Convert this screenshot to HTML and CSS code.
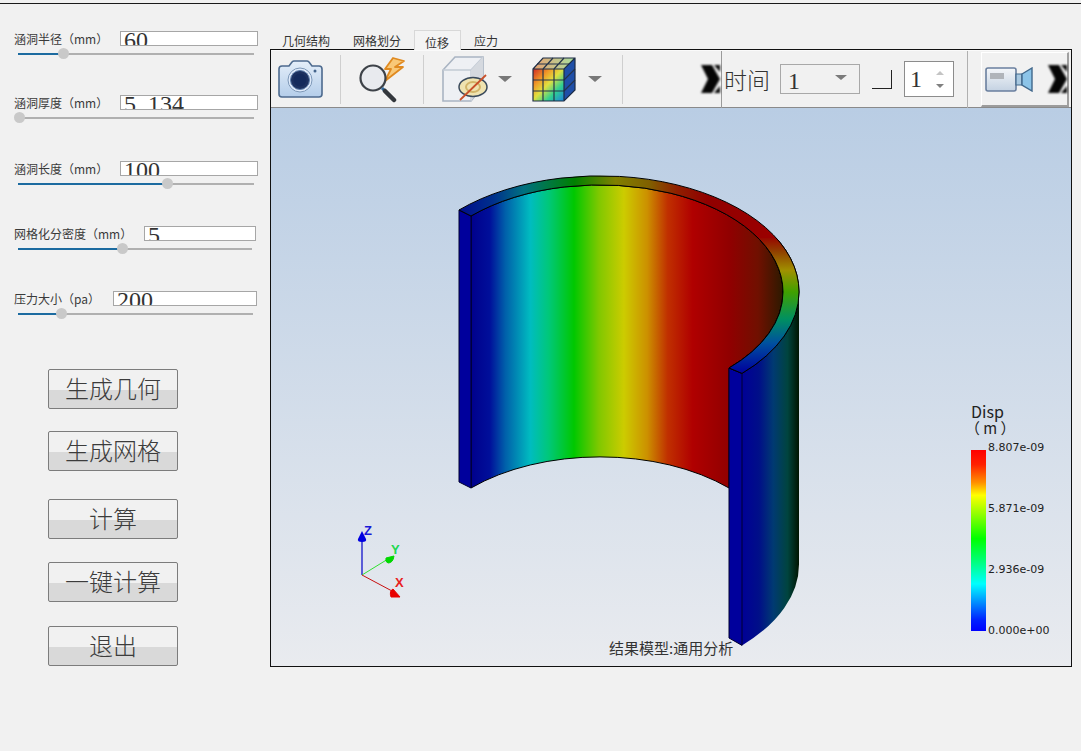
FILE: index.html
```html
<!DOCTYPE html>
<html lang="zh">
<head>
<meta charset="utf-8">
<title>涵洞分析</title>
<link rel="stylesheet" href="styles.css">
</head>
<body>
<div class="topline"></div>
<div class="workspace">
  <aside class="sidebar">
    <div class="field field-a">
      <div class="field-row"><span class="label">涵洞半径（mm）</span><div class="num num-a">60</div></div>
      <div class="track track-a"><div class="fill" style="width:45px"></div><div class="knob" style="left:45px"></div></div>
    </div>
    <div class="field field-b">
      <div class="field-row"><span class="label">涵洞厚度（mm）</span><div class="num num-a">5<span class="dot">.</span>134</div></div>
      <div class="track track-a"><div class="knob" style="left:1px"></div></div>
    </div>
    <div class="field">
      <div class="field-row"><span class="label">涵洞长度（mm）</span><div class="num num-a">100</div></div>
      <div class="track track-a"><div class="fill" style="width:149px"></div><div class="knob" style="left:149px"></div></div>
    </div>
    <div class="field">
      <div class="field-row"><span class="label">网格化分密度（mm）</span><div class="num num-b">5</div></div>
      <div class="track track-b"><div class="fill" style="width:104px"></div><div class="knob" style="left:104px"></div></div>
    </div>
    <div class="field">
      <div class="field-row"><span class="label">压力大小（pa）</span><div class="num num-c">200</div></div>
      <div class="track track-c"><div class="fill" style="width:43px"></div><div class="knob" style="left:43px"></div></div>
    </div>
    <div class="actions">
      <button class="btn">生成几何</button>
      <button class="btn gap-22">生成网格</button>
      <button class="btn gap-28">计算</button>
      <button class="btn gap-23">一键计算</button>
      <button class="btn gap-24">退出</button>
    </div>
  </aside>
  <main class="main">
    <nav class="tabs">
      <span class="tab tab-first">几何结构</span>
      <span class="tab">网格划分</span>
      <span class="tab tab-active">位移</span>
      <span class="tab">应力</span>
    </nav>
    <section class="panel">
      <div class="toolbar">
        <svg class="icon icon-camera" width="46" height="38" viewBox="0 0 46 38">
          <defs><linearGradient id="camBody" x1="0" y1="0" x2="0" y2="1"><stop offset="0" stop-color="#e4eef9"/><stop offset="1" stop-color="#b4cdea"/></linearGradient></defs>
          <path d="M2 9 q0-3 3-3 h7 l3-4 q1-1 2-1 h13 q1 0 2 1 l3 4 h7 q3 0 3 3 v25 q0 3-3 3 h-37 q-3 0-3-3z" fill="url(#camBody)" stroke="#4d6a8e" stroke-width="1.6"/>
          <circle cx="23" cy="20" r="12" fill="#dfeafa" stroke="#7d98b8"/>
          <circle cx="23" cy="20" r="9.5" fill="#1d3160" stroke="#5d7eaa" stroke-width="1"/>
          <circle cx="23" cy="20" r="6.5" fill="#142a5c"/>
          <circle cx="38" cy="11" r="1.5" fill="#44648c"/>
        </svg>
        <div class="sep sep-a"></div>
        <svg class="icon icon-mag" width="48" height="46" viewBox="0 0 48 46">
          <path d="M35 1 L27 12 H33 L27 24 L45 10 H37 L46 4 Z" fill="#f8c878" stroke="#e08a20" stroke-width="1.8" stroke-linejoin="round"/>
          <circle cx="15" cy="21" r="12.5" fill="#e8eaee" stroke="#3d4248" stroke-width="2.2"/>
          <path d="M24 31 L27 34" stroke="#2e6aa0" stroke-width="3"/>
          <path d="M27 34 L36 43" stroke="#33373c" stroke-width="4.5" stroke-linecap="round"/>
        </svg>
        <div class="sep sep-b"></div>
        <svg class="icon icon-cube" width="46" height="46" viewBox="0 0 46 46">
          <path d="M1 14 L13 1 H41 V30 L29 45 H1 Z" fill="#eef0f4" stroke="#a9b4c2" stroke-width="1.6"/>
          <path d="M1 14 H29 L41 1 M29 14 V45" fill="none" stroke="#c2cad4" stroke-width="1.3"/>
          <path d="M29 14 L41 1 V30 L29 45Z" fill="#d5d9df"/>
          <ellipse cx="31" cy="31" rx="14" ry="9.5" fill="#efe3b0" stroke="#3a4a5c" stroke-width="1.5"/>
          <ellipse cx="31" cy="31" rx="7" ry="5" fill="none" stroke="#d2b56a" stroke-width="2"/>
          <path d="M18 44 L44 19" stroke="#c8502a" stroke-width="1.8"/>
        </svg>
        <div class="caret caret-a"></div>
        <svg class="icon icon-grid" width="44" height="45" viewBox="0 0 44 45">
          <defs>
            <linearGradient id="gridFace" x1="0" y1="0" x2="1" y2="1"><stop offset="0" stop-color="#d02824"/><stop offset=".28" stop-color="#f09a28"/><stop offset=".48" stop-color="#e0e040"/><stop offset=".72" stop-color="#30d090"/><stop offset="1" stop-color="#1c80e0"/></linearGradient>
            <linearGradient id="gridTop" x1="0" y1="0" x2="1" y2="0"><stop offset="0" stop-color="#e8a070"/><stop offset="1" stop-color="#a8e0a0"/></linearGradient>
          </defs>
          <path d="M1 12 L11 1 H43 L32 12 Z" fill="url(#gridTop)"/>
          <rect x="1" y="12" width="31" height="32" rx="1" fill="url(#gridFace)"/>
          <path d="M32 12 L43 1 V33 L32 44 Z" fill="#1f4fa8"/>
          <path d="M11 12 V44 M22 12 V44 M1 23 H32 M1 34 H32 M11 12 L21 1 M22 12 L32 1 M5 7 H37 M32 23 L43 12 M32 34 L43 23" stroke="#26344a" stroke-width="1.2" fill="none"/>
          <path d="M1 12 L11 1 H43 V33 L32 44 H1 Z M1 12 H32 L43 1 M32 12 V44" fill="none" stroke="#1d2c44" stroke-width="1.2"/>
        </svg>
        <div class="caret caret-b"></div>
        <div class="sep sep-c"></div>
        <svg class="icon expander exp-a" width="20" height="30" viewBox="0 0 20 30">
          <path d="M1 1 H12 L20 15 L12 29 H1 L8 15 Z" fill="#050505"/>
          <path d="M14 1 H20 V8 Z M14 29 H20 V22 Z" fill="#050505"/>
        </svg>
        <div class="time-group">
          <span class="time-label">时间</span>
          <div class="combo"><span>1</span><i class="combo-arrow"></i></div>
          <div class="corner"></div>
          <div class="spin"><span>1</span><div class="spin-arrows"><i class="up"></i><i class="down"></i></div></div>
        </div>
        <div class="cam-group">
          <svg class="icon icon-video" width="48" height="25" viewBox="0 0 48 25">
            <defs><linearGradient id="vidBody" x1="0" y1="0" x2="0" y2="1"><stop offset="0" stop-color="#f4f6f9"/><stop offset="1" stop-color="#c4d2e2"/></linearGradient></defs>
            <rect x="1" y="1" width="30" height="23" rx="2" fill="url(#vidBody)" stroke="#6a7f9e" stroke-width="1.6"/>
            <rect x="5" y="6" width="14" height="6" fill="#b0b4ba"/>
            <path d="M31 7 H37 V18 H31 Z" fill="#a8c8e0" stroke="#41688c" stroke-width="1.2"/>
            <path d="M37 7 L47 1 V24 L37 18 Z" fill="#8cc4e8" stroke="#41688c" stroke-width="1.4"/>
          </svg>
          <svg class="icon expander exp-b" width="20" height="30" viewBox="0 0 20 30">
            <path d="M1 1 H12 L20 15 L12 29 H1 L8 15 Z" fill="#050505"/>
            <path d="M14 1 H20 V8 Z M14 29 H20 V22 Z" fill="#050505"/>
          </svg>
        </div>
      </div>
      <div class="canvas">
        <svg class="scene" width="800" height="558" viewBox="271 108 800 558">
          <defs>
            <linearGradient id="wall" gradientUnits="userSpaceOnUse" x1="471" y1="0" x2="783" y2="0">
              <stop offset="0" stop-color="#00008c"/>
              <stop offset=".06" stop-color="#000f9a"/>
              <stop offset=".11" stop-color="#0060aa"/>
              <stop offset=".19" stop-color="#00bcc0"/>
              <stop offset=".25" stop-color="#00c878"/>
              <stop offset=".33" stop-color="#00c800"/>
              <stop offset=".41" stop-color="#80c800"/>
              <stop offset=".49" stop-color="#cccc00"/>
              <stop offset=".565" stop-color="#cc9000"/>
              <stop offset=".63" stop-color="#c03000"/>
              <stop offset=".71" stop-color="#b00000"/>
              <stop offset=".83" stop-color="#900000"/>
              <stop offset=".92" stop-color="#701000"/>
              <stop offset="1" stop-color="#2c1a00"/>
            </linearGradient>
            <linearGradient id="ringTop" gradientUnits="userSpaceOnUse" x1="459" y1="0" x2="799" y2="0">
              <stop offset="0" stop-color="#000c8c"/>
              <stop offset=".1" stop-color="#00308c"/>
              <stop offset=".19" stop-color="#007080"/>
              <stop offset=".34" stop-color="#008000"/>
              <stop offset=".46" stop-color="#808000"/>
              <stop offset=".56" stop-color="#806000"/>
              <stop offset=".64" stop-color="#902000"/>
              <stop offset=".73" stop-color="#900000"/>
              <stop offset="1" stop-color="#a00000"/>
            </linearGradient>
            <linearGradient id="ringSide" gradientUnits="userSpaceOnUse" x1="0" y1="238" x2="0" y2="373">
              <stop offset="0" stop-color="#980800"/>
              <stop offset=".1" stop-color="#904000"/>
              <stop offset=".24" stop-color="#a09000"/>
              <stop offset=".4" stop-color="#40a000"/>
              <stop offset=".6" stop-color="#009060"/>
              <stop offset=".78" stop-color="#0050a0"/>
              <stop offset="1" stop-color="#00009c"/>
            </linearGradient>
            <linearGradient id="outer" gradientUnits="userSpaceOnUse" x1="742" y1="0" x2="799" y2="0">
              <stop offset="0" stop-color="#000096"/>
              <stop offset=".3" stop-color="#000f88"/>
              <stop offset=".55" stop-color="#003a72"/>
              <stop offset=".8" stop-color="#00443e"/>
              <stop offset="1" stop-color="#001400"/>
            </linearGradient>
            <clipPath id="ringClip"><rect x="700" y="238" width="110" height="140"/></clipPath>
          </defs>
          <path d="M471 216 A183 107 0 0 1 783 292 A183 107 0 0 1 729 368 V488 A183 107 0 0 0 471 488 Z" fill="url(#wall)" stroke="#000" stroke-width="1"/>
          <path d="M799 292 A199 116 0 0 1 742 373.4 V645.4 A199 116 0 0 0 799 564 Z" fill="url(#outer)"/>
          <path d="M459 210 L471 216 V488 L459 482 Z" fill="#00009c" stroke="#000030" stroke-width="1"/>
          <path d="M729 368 L742 373.4 V645.4 L729 638 Z" fill="#00009c" stroke="#000030" stroke-width="1"/>
          <path d="M459 210 A199 116 0 0 1 799 292 A199 116 0 0 1 742 373.4 L729 368 A183 107 0 0 0 783 292 A183 107 0 0 0 471 216 Z" fill="url(#ringTop)" stroke="#000" stroke-width="1"/>
          <path d="M459 210 A199 116 0 0 1 799 292 A199 116 0 0 1 742 373.4 L729 368 A183 107 0 0 0 783 292 A183 107 0 0 0 471 216 Z" fill="url(#ringSide)" stroke="#000" stroke-width="1" clip-path="url(#ringClip)"/>

          <line x1="362" y1="575" x2="362" y2="538" stroke="#0000c8" stroke-width="1.2"/>
          <path d="M362 531 L366 539 Q367 542 362 542 Q357 542 358 539 Z" fill="#0000e0"/>
          <line x1="362" y1="575" x2="388" y2="559" stroke="#30e030" stroke-width="1"/>
          <path d="M394 556 Q393 563 388 563 Q385 562 386 558 Z" fill="#00d800" stroke="#00d800" stroke-width="1"/>
          <line x1="362" y1="575" x2="392" y2="591" stroke="#c81010" stroke-width="1"/>
          <path d="M400 597 L391 597 Q389 591 393 589 Z" fill="#e80000" stroke="#e80000" stroke-width="1"/>
          <text class="axis axis-z" x="364" y="535">Z</text>
          <text class="axis axis-y" x="391" y="554">Y</text>
          <text class="axis axis-x" x="395" y="587">X</text>
        </svg>
        <div class="legend">
          <div class="legend-title">Disp</div>
          <div class="legend-unit">（ m ）</div>
          <div class="legend-body">
            <div class="legend-bar"></div>
            <div class="legend-ticks">
              <span>8.807e-09</span>
              <span>5.871e-09</span>
              <span>2.936e-09</span>
              <span>0.000e+00</span>
            </div>
          </div>
        </div>
        <div class="model-label">结果模型:通用分析</div>
      </div>
    </section>
  </main>
</div>
</body>
</html>
```
FILE: styles.css
```css
* { box-sizing: border-box; }
html, body { margin: 0; height: 100%; }
body {
  width: 1081px;
  height: 751px;
  overflow: hidden;
  background: #f1f1f1;
  font-family: "Noto Sans CJK SC", "Liberation Sans", sans-serif;
  color: #333;
}
.topline { height: 1px; margin-top: 3px; background: #1a1a1a; }
.workspace { display: flex; align-items: flex-start; }

/* sidebar */
.sidebar { width: 270px; padding-top: 27px; flex: none; }
.field { height: 65px; padding-left: 14px; }
.field-a { height: 64px; }
.field-b { height: 66px; }
.field-row { display: flex; justify-content: space-between; align-items: center; height: 15px; }
.label { font-size: 12px; line-height: 13px; color: #3a3a3a; white-space: nowrap; }
.num {
  height: 15px;
  overflow: hidden;
  background: #fff;
  border: 1px solid #a6a6a6;
  font-family: "Liberation Serif", "Noto Sans CJK SC", serif;
  font-size: 24px;
  line-height: 17px;
  padding-left: 3px;
  color: #333;
}
.dot { display: inline-block; width: 12px; }
.num-a { width: 138px; margin-right: 12px; }
.num-b { width: 112px; margin-right: 14px; }
.num-c { width: 144px; margin-right: 13px; }
.track { position: relative; height: 2px; margin: 7px 0 0 4px; background: #b0b0b0; }
.track-a { width: 236px; }
.track-b { width: 234px; }
.track-c { width: 235px; }
.fill { height: 2px; background: #1c6ba0; }
.knob {
  position: absolute;
  top: -5px;
  width: 11px;
  height: 11px;
  margin-left: -5px;
  border-radius: 50%;
  background: #c9c9c9;
}
.actions { display: flex; flex-direction: column; align-items: flex-start; padding: 13px 0 0 48px; }
.btn {
  width: 130px;
  height: 40px;
  padding: 0 0 3px;
  border: 1px solid #7c7c7c;
  border-radius: 2px;
  background: linear-gradient(#f1f1f1 0, #f1f1f1 52%, #d9d9d9 52%, #d9d9d9 100%);
  font-family: "Noto Sans CJK SC", sans-serif;
  font-size: 24px;
  font-weight: 300;
  line-height: 34px;
  color: #3c3c3c;
}
.gap-22 { margin-top: 22px; }
.gap-28 { margin-top: 28px; }
.gap-23 { margin-top: 23px; }
.gap-24 { margin-top: 24px; }

/* main */
.main { width: 802px; flex: none; margin-top: 26px; }
.tabs { display: flex; align-items: flex-end; height: 19px; font-size: 12px; line-height: 17px; color: #333; }
.tab { padding: 0 11px; height: 17px; white-space: nowrap; }
.tab-first { margin-left: 1px; padding-right: 12px; }
.tab-active {
  height: 20px;
  margin: 0 0 -1px 2px;
  padding: 3px 10px 0;
  width: 47px;
  background: #f4f4f4;
  border: 1px solid #d8d8d8;
  border-bottom: 0;
  position: relative;
}
.tab-active + .tab { margin-left: 2px; }
.panel { height: 618px; border: 1px solid #111; background: #f1f1f1; }
.toolbar { display: flex; align-items: center; height: 58px; border-bottom: 1px solid #8a8a8a; border-top: 1px solid #fafafa; }
.icon { flex: none; display: block; filter: blur(.35px); }
.sep { flex: none; width: 1px; height: 49px; background: #cfcfcf; }
.icon-camera { margin-left: 6px; }
.sep-a { margin-left: 17px; }
.icon-mag { margin-left: 17px; margin-top: 2px; }
.sep-b { margin-left: 17px; }
.icon-cube { margin-left: 18px; }
.caret { flex: none; width: 0; height: 0; border-style: solid; border-width: 6px 7px 0; border-color: #787878 transparent transparent; }
.caret-a { margin-left: 10px; }
.icon-grid { margin-left: 20px; }
.caret-b { margin-left: 12px; }
.sep-c { margin-left: 20px; }
.exp-a { margin-left: 77px; filter: blur(1px); }
.time-group {
  flex: none;
  display: flex;
  align-items: center;
  width: 247px;
  height: 57px;
  margin-left: 1px;
  padding-left: 2px;
  border-left: 1px solid #9a9a9a;
  border-right: 1px solid #b0b0b0;
}
.time-label { width: 48px; font-size: 23px; font-weight: 300; line-height: 30px; color: #333; }
.combo {
  position: relative;
  width: 80px;
  height: 30px;
  margin-left: 8px;
  padding-left: 7px;
  border: 1px solid #a8a8a8;
  font-family: "Liberation Serif", serif;
  font-size: 24px;
  line-height: 32px;
  color: #333;
}
.combo-arrow {
  position: absolute;
  right: 12px;
  top: 10px;
  border-style: solid;
  border-width: 5px 6px 0;
  border-color: #7a7a7a transparent transparent;
}
.corner { width: 20px; height: 19px; margin-left: 12px; margin-top: 0; border-right: 1px solid #222; border-bottom: 1px solid #222; }
.spin {
  display: flex;
  justify-content: space-between;
  align-items: center;
  width: 50px;
  height: 36px;
  margin-left: 12px;
  padding: 0 9px 0 5px;
  background: #fff;
  border: 1px solid #8c8c8c;
  font-family: "Liberation Serif", serif;
  font-size: 24px;
  line-height: 34px;
  color: #333;
}
.spin-arrows { display: flex; flex-direction: column; gap: 9px; }
.spin-arrows i { display: block; width: 0; height: 0; border-style: solid; border-width: 0 4.5px 4px; border-color: transparent transparent #c4c4c4; }
.spin-arrows .down { border-width: 4px 4.5px 0; border-color: #808080 transparent transparent; }
.cam-group {
  flex: none;
  display: flex;
  align-items: center;
  width: 88px;
  height: 55px;
  margin: 0 0 0 13px;
  align-self: flex-end;
  padding-left: 3px;
  background: #f1f1f1;
  border-top: 1px solid #fff;
  border-left: 1px solid #fff;
  border-right: 2px solid #a0a0a0;
  border-bottom: 2px solid #9c9c9c;
}
.exp-b { margin-left: 14px; filter: blur(1px); }

/* canvas */
.canvas {
  position: relative;
  width: 800px;
  height: 558px;
  overflow: hidden;
  background: linear-gradient(#b9cde4, #e9ebef);
}
.scene { display: block; }
.axis { font-family: "Liberation Sans", sans-serif; font-size: 13px; font-weight: 700; }
.axis-z { fill: #1818d8; }
.axis-y { fill: #20d850; }
.axis-x { fill: #e82020; }
.legend { position: absolute; left: 700px; top: 294px; width: 90px; }
.legend-title { font-size: 16px; line-height: 18px; color: #222; font-family: "Noto Sans CJK SC", sans-serif; }
.legend-unit { font-size: 15px; line-height: 16px; margin-left: -6px; color: #222; white-space: nowrap; }
.legend-body { display: flex; margin-top: 14px; }
.legend-bar {
  width: 15px;
  height: 181px;
  background: linear-gradient(#ff0000 0, #ff2000 8%, #ff9000 18%, #ffff00 25%, #80ff00 37%, #00ff00 49%, #00ff80 62%, #00ffff 74%, #0090ff 84%, #0020ff 94%, #0000ff 100%);
}
.legend-ticks {
  display: flex;
  flex-direction: column;
  justify-content: space-between;
  height: 200px;
  margin: -11px 0 0 2px;
  padding-top: 1px;
  font-family: "DejaVu Sans", sans-serif;
  font-size: 11px;
  line-height: 16px;
  color: #222;
  white-space: nowrap;
}
.model-label { position: absolute; left: 338px; top: 530px; font-size: 15px; line-height: 20px; color: #333; white-space: nowrap; }
```
